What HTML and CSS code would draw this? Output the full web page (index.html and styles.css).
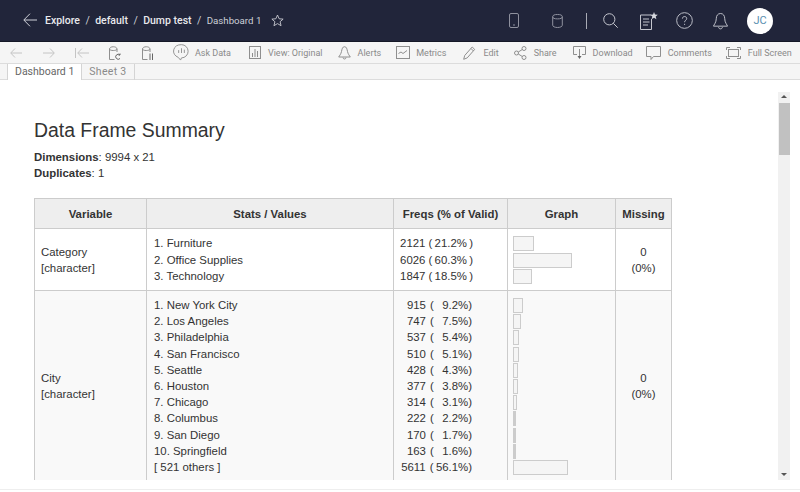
FILE: index.html
```html
<!DOCTYPE html>
<html lang="en">
<head>
    <meta charset="UTF-8">
    <meta name="viewport" content="width=device-width, initial-scale=1.0">
    <title>Dashboard 1</title>
    <link rel="stylesheet" href="styles.css">
</head>
<body>

<header class="topbar">
    <div class="crumbs">
        <svg class="back" width="14" height="14" viewBox="0 0 14 14"><path d="M7 .7.8 7 7 13.300M1 7h13"/></svg>
        <b>Explore</b><span class="sep">/</span><b>default</b><span class="sep">/</span><b>Dump test</b><span class="sep">/</span><span class="current">Dashboard 1</span>
        <svg class="star" width="13" height="13" viewBox="0 0 15 15"><path d="M7.500 1.200 9.400 5.500l4.600.4-3.500 3 1.100 4.600-4.100-2.400-4.100 2.400 1.100-4.600-3.500-3 4.600-.4z"/></svg>
    </div>
    <div class="top-icons">
        <svg class="ic-phone" width="10" height="15" viewBox="0 0 10 15"><rect x=".5" y=".5" width="9" height="14" rx="1.500"/><path d="M4 12h2"/></svg>
        <svg class="ic-db" width="11" height="14" viewBox="0 0 11 14"><ellipse cx="5.500" cy="2.700" rx="4.800" ry="2.200"/><path d="M.7 2.700v8.600c0 1.200 2.100 2.200 4.800 2.200s4.800-1 4.800-2.200V2.700"/></svg>
        <span class="top-divider"></span>
        <svg class="ic-search" width="15" height="15" viewBox="0 0 15 15"><circle cx="6.300" cy="6.300" r="5.600"/><path d="m10.300 10.300 4.400 4.400"/></svg>
        <svg class="ic-notes" width="18" height="18" viewBox="0 0 18 18"><path d="M11 3H.5v14.500h11V7M3 7h6M3 10h6.500M3 13h5"/><path class="fill" d="m14 0 1 2.500 2.800.2-2.100 1.800.7 2.700L14 5.800l-2.400 1.400.7-2.700-2.100-1.800 2.800-.2z"/></svg>
        <svg class="ic-help" width="17" height="17" viewBox="0 0 18 18"><circle cx="9" cy="9" r="8.300"/><path d="M6.800 7c0-1.400 1-2.200 2.300-2.200S11.300 5.600 11.300 7c0 1.800-2.200 1.800-2.200 3.800M9.100 12.500v1.200"/></svg>
        <svg class="ic-bell" width="15" height="18" viewBox="0 0 16 18"><path d="M8 1C5 1 3.500 3.500 3.500 6.500c0 4-2.500 6.500-3 8h15c-.5-1.500-3-4-3-8C12.500 3.500 11 1 8 1zM6 15.500c0 2.500 4 2.500 4 0"/></svg>
        <span class="avatar">JC</span>
    </div>
</header>

<nav class="toolbar">
    <svg class="tool-icon nudge-a" width="12" height="10" viewBox="0 0 12 10"><path d="M5 .5.700 5 5 9.500M1 5h11"/></svg>
    <svg class="tool-icon nudge-b" width="12" height="10" viewBox="0 0 12 10"><path d="M7 .5 11.300 5 7 9.500M11 5H0"/></svg>
    <svg class="tool-icon nudge-c" width="14" height="10" viewBox="0 0 14 10"><path d="M.5 0v10M7 .5 2.700 5 7 9.500M3 5h11"/></svg>
    <svg class="tool-icon nudge-d" width="12" height="14" viewBox="0 0 12 14"><path d="M5.500 13.500H.5V3c0-3 7.500-3 7.500 0v3M.5 3c0 2 7.500 2 7.500 0"/><path class="dark" d="M11 9a2.500 2.500 0 1 0 0 3.500M11 7.500V9H9.500"/></svg>
    <svg class="tool-icon nudge-e" width="12" height="14" viewBox="0 0 12 14"><path d="M5.500 13.500H.5V3c0-3 7.500-3 7.500 0v3M.5 3c0 2 7.500 2 7.500 0"/><path class="dark" d="M8 7.500v6.500M10.500 7.500v6.500"/></svg>
    <span class="tool ask">
        <svg class="tool-icon" width="17" height="17" viewBox="0 0 18 18"><path d="M9 .7a8.300 7 0 0 0-3.500 13.400L8 17l1-2.300A7 7 0 0 0 9 .7z"/><path d="M6 6.500v3M9 4.500v5M12 6v3.500"/></svg>
        Ask Data
    </span>
    <span class="tool view">
        <svg class="tool-icon" width="12" height="13" viewBox="0 0 12 13"><rect x=".5" y=".5" width="11" height="12"/><path d="M3.500 7v4M6 3v8M8.500 5v6"/></svg>
        View: Original
    </span>
    <span class="tool alerts">
        <svg class="tool-icon" width="13" height="14" viewBox="0 0 13 14"><path d="M6.500.7C4.500.7 4 3 3.500 5.500 3 8 1.500 9.800.7 11h11.600c-.8-1.200-2.300-3-2.800-5.500C9 3 8.500.7 6.500.7zM5 11.500c0 2 3 2 3 0"/></svg>
        Alerts
    </span>
    <span class="tool metrics">
        <svg class="tool-icon" width="14" height="13" viewBox="0 0 14 13"><rect x=".5" y=".5" width="13" height="12"/><path d="m2.500 7.500 2.500-1.500 2 1.500 4-3"/></svg>
        Metrics
    </span>
    <span class="tool edit">
        <svg class="tool-icon" width="13" height="14" viewBox="0 0 13 14"><path d="m.7 13.300 1-3.800 7.500-8.500 2.500 2.400-7.500 8.500zM8 2.500 10.500 5"/></svg>
        Edit
    </span>
    <span class="tool share">
        <svg class="tool-icon" width="13" height="14" viewBox="0 0 13 14"><circle cx="2.500" cy="7" r="2"/><circle cx="10" cy="2.500" r="2"/><circle cx="10" cy="11.500" r="2"/><path d="m4.300 6 4-2.500M4.300 8l4 2.500"/></svg>
        Share
    </span>
    <span class="tool download">
        <svg class="tool-icon" width="13" height="14" viewBox="0 0 13 14"><path d="M4 8.500H.5v-8h12v8H9M6.500 3v8"/><path class="fill" d="M4.500 10h4l-2 3z"/></svg>
        Download
    </span>
    <span class="tool comments">
        <svg class="tool-icon" width="15" height="14" viewBox="0 0 15 14"><path d="M.5.500h14v10H7.500L5 13.500v-3H.5z"/></svg>
        Comments
    </span>
    <span class="tool fullscreen">
        <svg class="tool-icon" width="15" height="12" viewBox="0 0 15 12"><path d="M.5 3V.5H4M11 .5h3.500V3M14.500 9v2.500H11M4 11.500H.5V9"/><rect x="2.500" y="2.500" width="10" height="7"/></svg>
        Full Screen
    </span>
</nav>

<div class="tabs">
    <span class="tab active">Dashboard 1</span>
    <span class="tab">Sheet 3</span>
</div>

<main class="viewer">
    <div class="report">
        <h3>Data Frame Summary</h3>
        <p class="meta"><strong>Dimensions</strong>: 9994 x 21<br><strong>Duplicates</strong>: 1</p>
        <table>
            <thead>
                <tr>
                    <th class="col-var">Variable</th>
                    <th class="col-stats">Stats / Values</th>
                    <th class="col-freq">Freqs (% of Valid)</th>
                    <th class="col-graph">Graph</th>
                    <th class="col-miss">Missing</th>
                </tr>
            </thead>
            <tbody>
                <tr>
                    <td>Category<br>[character]</td>
                    <td class="stats">1. Furniture<br>2. Office Supplies<br>3. Technology</td>
                    <td class="freq">2121 (&#8201;21.2%&#8201;)<br>6026 (&#8201;60.3%&#8201;)<br>1847 (&#8201;18.5%&#8201;)</td>
                    <td class="graph">
                        <div class="bar" style="width:21px"></div>
                        <div class="bar" style="width:59px"></div>
                        <div class="bar" style="width:19px"></div>
                    </td>
                    <td class="miss">0<br>(0%)</td>
                </tr>
                <tr class="odd">
                    <td>City<br>[character]</td>
                    <td class="stats">1. New York City<br>2. Los Angeles<br>3. Philadelphia<br>4. San Francisco<br>5. Seattle<br>6. Houston<br>7. Chicago<br>8. Columbus<br>9. San Diego<br>10. Springfield<br>[ 521 others ]</td>
                    <td class="freq city">915 ( &nbsp;9.2%)<br>747 ( &nbsp;7.5%)<br>537 ( &nbsp;5.4%)<br>510 ( &nbsp;5.1%)<br>428 ( &nbsp;4.3%)<br>377 ( &nbsp;3.8%)<br>314 ( &nbsp;3.1%)<br>222 ( &nbsp;2.2%)<br>170 ( &nbsp;1.7%)<br>163 ( &nbsp;1.6%)<br>5611 (&#8201;56.1%)</td>
                    <td class="graph">
                        <div class="bar" style="width:10px"></div>
                        <div class="bar" style="width:8px"></div>
                        <div class="bar" style="width:6px"></div>
                        <div class="bar" style="width:6px"></div>
                        <div class="bar" style="width:5px"></div>
                        <div class="bar" style="width:5px"></div>
                        <div class="bar" style="width:4px"></div>
                        <div class="bar thin" style="width:3px"></div>
                        <div class="bar thin" style="width:3px"></div>
                        <div class="bar thin" style="width:3px"></div>
                        <div class="bar" style="width:55px"></div>
                    </td>
                    <td class="miss">0<br>(0%)</td>
                </tr>
            </tbody>
        </table>
    </div>
    <div class="scrollbar">
        <span class="arrow up"></span>
        <span class="thumb"></span>
        <span class="arrow down"></span>
    </div>
</main>

<div class="bottom"></div>

</body>
</html>
```

FILE: styles.css
```css
* {
    box-sizing: border-box;
}
html, body {
    height: 100%;
}
body {
    margin: 0;
    font-family: Roboto, "Liberation Sans", sans-serif;
    display: flex;
    flex-direction: column;
    overflow: hidden;
    background-color: #fff;
}
svg {
    display: block;
    flex: none;
    fill: none;
}

.topbar {
    height: 42px;
    flex: none;
    display: flex;
    justify-content: space-between;
    align-items: center;
    background-color: #21253a;
    border-bottom: 1px solid #151827;
    color: #cdd0d7;
    font-size: 10.5px;
}
.crumbs {
    display: flex;
    align-items: center;
    padding: 0 0 1px 23px;
}
.crumbs b {
    font-weight: 500;
    color: #e8e9ed;
}
.crumbs .sep {
    margin: 0 5.4px;
}
.crumbs .current {
    font-size: 9.7px;
}
.crumbs .back {
    margin-right: 8px;
    stroke: #cfd1d8;
}
.crumbs .star {
    margin-left: 10px;
    stroke: #cfd1d8;
}
.top-icons {
    display: flex;
    align-items: center;
    padding-right: 27px;
}
.top-icons svg {
    stroke: #c4c6ce;
}
.top-icons .ic-phone,
.top-icons .ic-db {
    stroke: #8f919e;
}
.top-icons .fill {
    fill: #d6d8de;
    stroke: none;
}
.ic-db {
    margin-left: 33px;
}
.top-divider {
    width: 1px;
    height: 16px;
    margin: 0 16px 0 23px;
    background-color: #a9abb5;
}
.ic-notes {
    margin-left: 22px;
}
.ic-help {
    margin-left: 18px;
}
.ic-bell {
    margin-left: 20px;
}
.avatar {
    width: 26px;
    height: 26px;
    margin-left: 19px;
    border-radius: 50%;
    background-color: #fff;
    color: #5a8fb0;
    font-size: 11px;
    line-height: 26px;
    text-align: center;
}

.toolbar {
    height: 22px;
    flex: none;
    display: flex;
    align-items: center;
    padding-left: 10px;
    background-color: #f5f5f5;
    border-bottom: 1px solid #dcdcdc;
    color: #8a8a8a;
    font-size: 9px;
}
.tool {
    display: flex;
    align-items: center;
    white-space: nowrap;
}
.tool-icon {
    stroke: #8f8f8f;
}
.tool-icon.nudge-a,
.tool-icon.nudge-b,
.tool-icon.nudge-c {
    stroke: #c4c4c4;
}
.tool-icon .dark {
    stroke: #666;
}
.tool-icon .fill {
    fill: #666;
    stroke: none;
}
.nudge-b {
    margin-left: 21px;
}
.nudge-c {
    margin-left: 20px;
}
.nudge-d {
    margin-left: 20px;
}
.nudge-e {
    margin-left: 21px;
}
.ask {
    margin-left: 19px;
    gap: 5px;
}
.view {
    margin-left: 18px;
    gap: 7px;
}
.alerts {
    margin-left: 15px;
    gap: 7px;
}
.metrics {
    margin-left: 15px;
    gap: 6px;
}
.edit {
    margin-left: 17px;
    gap: 7px;
}
.share {
    margin-left: 15px;
    gap: 7px;
}
.download {
    margin-left: 16px;
    gap: 7px;
}
.comments {
    margin-left: 13px;
    gap: 7px;
}
.fullscreen {
    margin-left: 14px;
    gap: 7px;
}

.tabs {
    height: 16px;
    flex: none;
    display: flex;
    padding-left: 7px;
    background-color: #f5f5f5;
    border-bottom: 1px solid #dcdcdc;
}
.tab {
    height: 16px;
    padding: 0 7px;
    border-right: 1px solid #d4d4d4;
    color: #8a8a8a;
    font-size: 10.5px;
    line-height: 16px;
}
.tab + .tab {
    letter-spacing: .3px;
}
.tab.active {
    background-color: #fff;
    border-left: 1px solid #d4d4d4;
    color: #666;
}

.viewer {
    flex: 1;
    min-height: 0;
    display: flex;
    overflow: hidden;
}
.report {
    flex: 1;
    padding: 39px 0 0 34px;
    color: #333;
    font-family: "Liberation Sans", Arial, sans-serif;
    font-size: 11.4px;
    line-height: 16.2px;
}
.report h3 {
    margin: 0 0 8px;
    font-size: 19.4px;
    font-weight: 400;
    line-height: 22px;
}
.report .meta {
    margin: 0 0 17px;
}
.report strong {
    font-weight: 700;
}

table {
    width: 638px;
    border-collapse: collapse;
    table-layout: fixed;
}
th, td {
    border: 1px solid #ccc;
    padding: 6px;
    vertical-align: middle;
}
th {
    height: 30px;
    padding: 0;
    background-color: #eee;
    text-align: center;
    font-weight: 700;
}
.col-var {
    width: 112px;
}
.col-stats {
    width: 247px;
}
.col-freq {
    width: 114px;
}
.col-graph {
    width: 108px;
}
tr.odd td {
    background-color: #f9f9f9;
}
td.stats {
    padding-left: 7px;
}
td.freq {
    text-align: right;
    padding: 6px 34px 6px 0;
    white-space: nowrap;
}
td.freq.city {
    padding-right: 35px;
    word-spacing: 1px;
}
td.miss {
    text-align: center;
}
td.graph {
    padding: 7px 5px 5px;
}
.bar {
    height: 15px;
    margin-bottom: 1.2px;
    border: 1px solid #ccc;
    background-color: #f5f5f5;
}
.bar.thin {
    background-color: #ccc;
}

.scrollbar {
    width: 12px;
    flex: none;
    display: flex;
    flex-direction: column;
    align-items: center;
    margin: 12px 10px 0 0;
    background-color: #f1f1f1;
}
.arrow {
    flex: none;
    width: 0;
    height: 0;
    border-left: 3px solid transparent;
    border-right: 3px solid transparent;
}
.arrow.up {
    margin: 3px 0 5px;
    border-bottom: 3px solid #555;
}
.arrow.down {
    margin: auto 0 4px;
    border-top: 3px solid #555;
}
.thumb {
    width: 11px;
    height: 52px;
    flex: none;
    background-color: #c1c1c1;
}
.bottom {
    height: 12px;
    flex: none;
    padding-top: 9px;
    background-color: #fff;
}
.bottom::after {
    content: "";
    display: block;
    height: 1px;
    background-color: #eee;
}
```
